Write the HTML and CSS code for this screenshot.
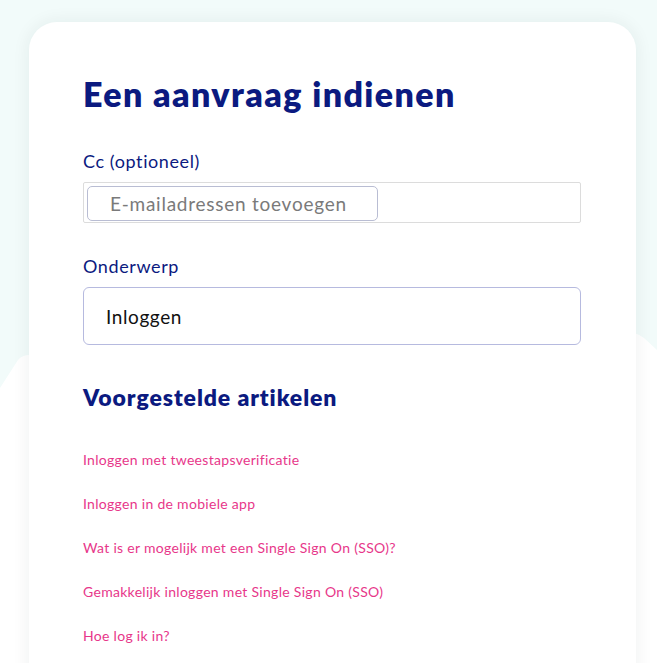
FILE: index.html
```html
<!DOCTYPE html>
<html lang="nl">
<head>
  <meta charset="UTF-8">
  <meta name="viewport" content="width=device-width, initial-scale=1.0">
  <title>Een aanvraag indienen</title>
  <link rel="stylesheet" href="styles.css">
</head>
<body>
  <!-- witte golf achter de kaart -->
  <svg class="golf" viewBox="0 0 657 663" preserveAspectRatio="none" aria-hidden="true">
    <path d="M0 388 L18 360 Q22 355 30 355 L620 330 Q632 330 644 338 L657 350 L657 663 L0 663 Z" fill="#ffffff"/>
  </svg>

  <div class="kaart">
    <h1 class="titel">Een aanvraag indienen</h1>

    <div class="veld">
      <label class="label" for="cc">Cc (optioneel)</label>
      <div class="cc-vak">
        <input id="cc" class="cc-invoer" type="text" placeholder="E-mailadressen toevoegen">
      </div>
    </div>

    <div class="veld">
      <label class="label" for="onderwerp">Onderwerp</label>
      <input id="onderwerp" class="invoer" type="text" value="Inloggen">
    </div>

    <h2 class="subtitel">Voorgestelde artikelen</h2>
    <ul class="artikelen">
      <li><a href="#">Inloggen met tweestapsverificatie</a></li>
      <li><a href="#">Inloggen in de mobiele app</a></li>
      <li><a href="#">Wat is er mogelijk met een Single Sign On (SSO)?</a></li>
      <li><a href="#">Gemakkelijk inloggen met Single Sign On (SSO)</a></li>
      <li><a href="#">Hoe log ik in?</a></li>
    </ul>
  </div>
</body>
</html>
```

FILE: styles.css
```css
body {
  margin: 0;
  padding: 0;
  background-color: #f2fbfa;
  font-family: Lato, "Open Sans", Arial, sans-serif;
  overflow: hidden;
  height: 663px;
  position: relative;
}

.golf {
  position: absolute;
  left: 0;
  top: 0;
  width: 100%;
  height: 100%;
}

.kaart {
  position: relative;
  margin: 22px 0 0 29px;
  width: 607px;
  height: 700px;
  box-sizing: border-box;
  padding: 52px 55px 0 54px;
  background-color: white;
  border-radius: 28px;
  box-shadow: 0 0 18px rgba(0, 40, 40, 0.07);
}

.titel {
  margin: 0 0 36px 0;
  font-size: 34px;
  font-weight: 800;
  letter-spacing: 1.4px;
  color: #0b1a80;
  line-height: 40px;
}

.veld {
  margin-bottom: 32px;
}

.label {
  display: block;
  font-size: 18px;
  letter-spacing: 0.6px;
  color: #0b1a80;
  margin-bottom: 10px;
  line-height: 22px;
}

.cc-vak {
  height: 41px;
  box-sizing: border-box;
  border: 1px solid #dcdcdc;
  border-radius: 2px;
  padding: 3px;
}

.cc-invoer {
  width: 291px;
  height: 35px;
  box-sizing: border-box;
  border: 1px solid #b9bdd3;
  border-radius: 5px;
  padding: 0 0 0 22px;
  font-family: inherit;
  font-size: 19px;
  letter-spacing: 0.75px;
  color: #333;
  outline: none;
}

.cc-invoer::placeholder {
  color: #7a7a7a;
}

.invoer {
  width: 100%;
  height: 58px;
  box-sizing: border-box;
  border: 1px solid #b6badf;
  border-radius: 6px;
  padding: 0 0 0 22px;
  font-family: inherit;
  font-size: 19px;
  letter-spacing: 0.6px;
  color: #111;
  outline: none;
}

.subtitel {
  margin: 38px 0 40px 0;
  font-size: 23px;
  font-weight: 800;
  letter-spacing: 0.9px;
  color: #0b1a80;
}

.artikelen {
  list-style: none;
  margin: 0;
  padding: 0;
}

.artikelen li {
  height: 44px;
  line-height: 16px;
}

.artikelen a {
  font-size: 14px;
  letter-spacing: 0.3px;
  color: #e7378a;
  text-decoration: none;
}
```
